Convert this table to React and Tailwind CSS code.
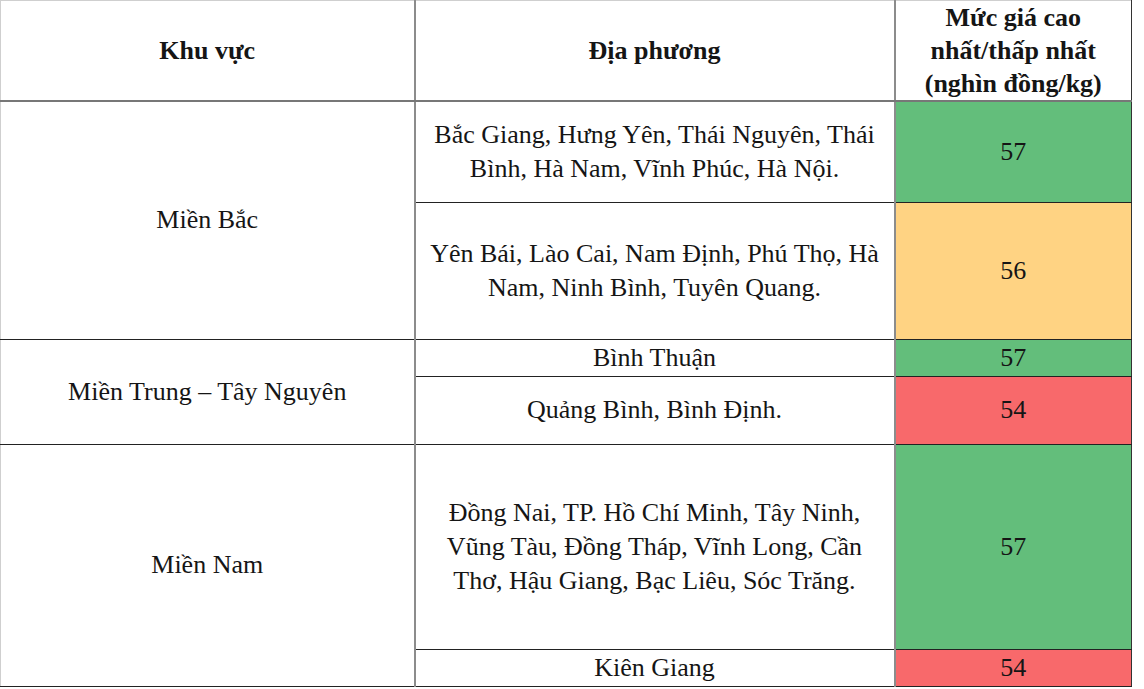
import React from 'react';

const rows = [
  { region: 'Miền Bắc', span: 2, place: ['Bắc Giang, Hưng Yên, Thái Nguyên, Thái', 'Bình, Hà Nam, Vĩnh Phúc, Hà Nội.'], price: 57, color: 'bg-[#63be7b]', h: 'h-[101px]' },
  { place: ['Yên Bái, Lào Cai, Nam Định, Phú Thọ, Hà', 'Nam, Ninh Bình, Tuyên Quang.'], price: 56, color: 'bg-[#ffd383]', h: 'h-[137px]' },
  { region: 'Miền Trung – Tây Nguyên', span: 2, place: ['Bình Thuận'], price: 57, color: 'bg-[#63be7b]', h: 'h-[37px]' },
  { place: ['Quảng Bình, Bình Định.'], price: 54, color: 'bg-[#f8696b]', h: 'h-[68px]' },
  { region: 'Miền Nam', span: 2, place: ['Đồng Nai, TP. Hồ Chí Minh, Tây Ninh,', 'Vũng Tàu, Đồng Tháp, Vĩnh Long, Cần', 'Thơ, Hậu Giang, Bạc Liêu, Sóc Trăng.'], price: 57, color: 'bg-[#63be7b]', h: 'h-[205px]' },
  { place: ['Kiên Giang'], price: 54, color: 'bg-[#f8696b]', h: 'h-[37px]' },
];

const cell = 'border-y border-y-[#222] border-x-2 border-x-[#8c8c8c] text-center align-middle p-0';
const head = 'border-t border-t-[#cfcfcf] border-b-2 border-b-[#777] border-x-2 border-x-[#8c8c8c] font-bold text-center align-middle p-0';

export default function App() {
  return (
    <div className="w-[1144px] h-[689px] bg-white overflow-hidden font-['Liberation_Serif','Times_New_Roman',serif]">
      <table className="border-collapse table-fixed w-[1131px] text-[#151515] text-[26px] leading-[34px]">
        <colgroup>
          <col className="w-[414px]" />
          <col className="w-[480px]" />
          <col className="w-[237px]" />
        </colgroup>
        <thead>
          <tr className="h-[99px]">
            <th className={`${head} border-l-[#cfcfcf] border-l`}>Khu vực</th>
            <th className={head}>Địa phương</th>
            <th className={`${head} leading-[33px] border-r border-r-[#333]`}>
              Mức giá cao<br />nhất/thấp nhất<br />(nghìn đồng/kg)
            </th>
          </tr>
        </thead>
        <tbody>
          {rows.map((r, i) => (
            <tr key={i} className={r.h}>
              {r.region && (
                <td rowSpan={r.span} className={`${cell} border-l border-l-[#cfcfcf]`}>
                  {r.region}
                </td>
              )}
              <td className={cell}>
                {r.place.map((line, j) => (
                  <div key={j}>{line}</div>
                ))}
              </td>
              <td className={`${cell} border-r border-r-[#333] ${r.color}`}>
                {r.price}
              </td>
            </tr>
          ))}
        </tbody>
      </table>
    </div>
  );
}
